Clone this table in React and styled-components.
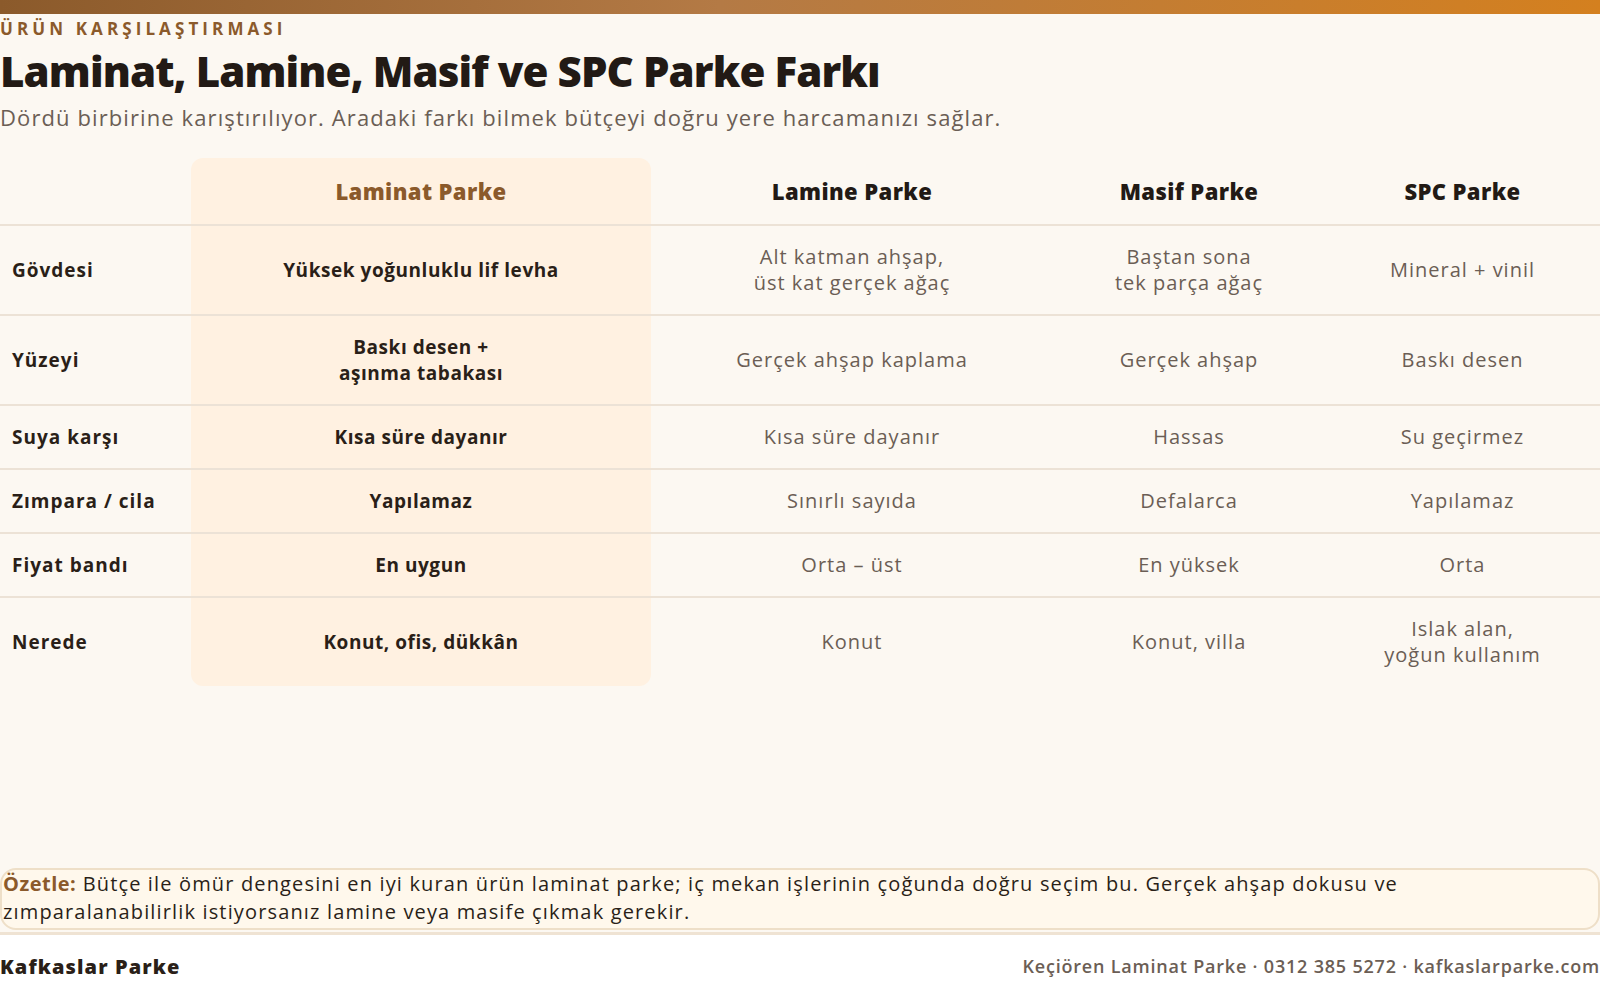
import React from 'react';
import styled, { createGlobalStyle } from 'styled-components';

const GlobalStyle = createGlobalStyle`
  html, body {
    margin: 0;
    padding: 0;
    background: #ffffff;
  }
  body {
    font-family: "Open Sans", "Noto Sans", sans-serif;
    color: #2a1f18;
  }
`;

const Page = styled.div`
  width: 1600px;
  height: 1000px;
  display: flex;
  flex-direction: column;
  overflow: hidden;
`;

const TopBar = styled.div`
  height: 14px;
  flex-shrink: 0;
  background: linear-gradient(90deg, #8b5a2b 0%, #b47a45 45%, #d4801f 100%);
`;

const Main = styled.main`
  flex: 1;
  display: flex;
  flex-direction: column;
  background: #fcf8f2;
  border-bottom: 3px solid #efe3d3;
`;

const Eyebrow = styled.div`
  margin-top: 4px;
  font-size: 17px;
  font-weight: 700;
  letter-spacing: 4.1px;
  color: #8b5a2b;
  line-height: 22px;
`;

const Title = styled.h1`
  margin: 6px 0 0;
  font-size: 42px;
  font-weight: 800;
  letter-spacing: -0.9px;
  line-height: 50px;
  color: #221a15;
`;

const Subtitle = styled.p`
  margin: 6px 0 0;
  font-size: 22px;
  line-height: 30px;
  letter-spacing: 1.1px;
  color: #6b5e55;
`;

const Table = styled.table`
  margin-top: 26px;
  width: 1600px;
  table-layout: fixed;
  border-collapse: separate;
  border-spacing: 0;
`;

const HeadCell = styled.th`
  padding: 18px 12px;
  font-size: 22px;
  line-height: 30px;
  font-weight: 800;
  letter-spacing: 0.4px;
  text-align: center;
  color: ${p => (p.$hl ? '#8b5a2b' : '#221a15')};
  background: ${p => (p.$hl ? '#fff1e1' : 'transparent')};
  border-radius: ${p => (p.$hl ? '12px 12px 0 0' : '0')};
  border-bottom: 2px solid #ece2d6;
`;

const Cell = styled.td`
  padding: 18px 12px;
  font-size: ${p => (p.$label || p.$hl ? '19px' : '20px')};
  line-height: 26px;
  letter-spacing: ${p => (p.$label ? '1px' : p.$hl ? '0.55px' : '1px')};
  text-align: ${p => (p.$label ? 'left' : 'center')};
  font-weight: ${p => (p.$label || p.$hl ? 700 : 400)};
  color: ${p => (p.$label || p.$hl ? '#2a1f18' : '#6b5e55')};
  background: ${p => (p.$hl ? '#fff1e1' : 'transparent')};
  border-bottom: ${p => (p.$last ? 'none' : '2px solid #ece2d6')};
  border-radius: ${p => (p.$hl && p.$last ? '0 0 12px 12px' : '0')};
  white-space: pre-line;
`;

const Spacer = styled.div`
  flex: 1;
`;

const Summary = styled.div`
  margin-bottom: 2px;
  border: 2px solid #eedfc8;
  border-radius: 16px;
  background: #fff8ec;
  padding: 0 0 2px 1px;
  font-size: 20px;
  line-height: 28px;
  letter-spacing: 1.15px;
  color: #2a1f18;
`;

const SummaryLabel = styled.strong`
  color: #8b5a2b;
  font-weight: 700;
  letter-spacing: 0.5px;
`;

const Footer = styled.footer`
  height: 65px;
  flex-shrink: 0;
  display: flex;
  align-items: center;
  justify-content: space-between;
  padding-bottom: 3px;
  box-sizing: border-box;
  background: #ffffff;
`;

const Brand = styled.div`
  font-size: 20px;
  font-weight: 800;
  letter-spacing: 1.1px;
  color: #2a1f18;
`;

const Contact = styled.div`
  font-size: 18px;
  font-weight: 600;
  letter-spacing: 0.8px;
  color: #6b5e55;
`;

const columns = [
  { name: 'Laminat Parke', hl: true },
  { name: 'Lamine Parke' },
  { name: 'Masif Parke' },
  { name: 'SPC Parke' },
];

const rows = [
  ['Gövdesi', 'Yüksek yoğunluklu lif levha', 'Alt katman ahşap,\nüst kat gerçek ağaç', 'Baştan sona\ntek parça ağaç', 'Mineral + vinil'],
  ['Yüzeyi', 'Baskı desen +\naşınma tabakası', 'Gerçek ahşap kaplama', 'Gerçek ahşap', 'Baskı desen'],
  ['Suya karşı', 'Kısa süre dayanır', 'Kısa süre dayanır', 'Hassas', 'Su geçirmez'],
  ['Zımpara / cila', 'Yapılamaz', 'Sınırlı sayıda', 'Defalarca', 'Yapılamaz'],
  ['Fiyat bandı', 'En uygun', 'Orta – üst', 'En yüksek', 'Orta'],
  ['Nerede', 'Konut, ofis, dükkân', 'Konut', 'Konut, villa', 'Islak alan,\nyoğun kullanım'],
];

export default function App() {
  return (
    <>
      <GlobalStyle />
      <Page>
        <TopBar />
        <Main>
          <Eyebrow>ÜRÜN KARŞILAŞTIRMASI</Eyebrow>
          <Title>Laminat, Lamine, Masif ve SPC Parke Farkı</Title>
          <Subtitle>Dördü birbirine karıştırılıyor. Aradaki farkı bilmek bütçeyi doğru yere harcamanızı sağlar.</Subtitle>
          <Table>
            <colgroup>
              <col style={{ width: 191 }} />
              <col style={{ width: 460 }} />
              <col style={{ width: 402 }} />
              <col style={{ width: 272 }} />
              <col style={{ width: 275 }} />
            </colgroup>
            <thead>
              <tr>
                <HeadCell />
                {columns.map(c => (
                  <HeadCell key={c.name} $hl={c.hl}>{c.name}</HeadCell>
                ))}
              </tr>
            </thead>
            <tbody>
              {rows.map((r, i) => {
                const last = i === rows.length - 1;
                return (
                  <tr key={r[0]}>
                    <Cell $label $last={last}>{r[0]}</Cell>
                    {r.slice(1).map((v, j) => (
                      <Cell key={j} $hl={j === 0} $last={last}>{v}</Cell>
                    ))}
                  </tr>
                );
              })}
            </tbody>
          </Table>
          <Spacer />
          <Summary>
            <SummaryLabel>Özetle:</SummaryLabel> Bütçe ile ömür dengesini en iyi kuran ürün laminat parke; iç mekan işlerinin çoğunda doğru seçim bu. Gerçek ahşap dokusu ve
            <br />
            zımparalanabilirlik istiyorsanız lamine veya masife çıkmak gerekir.
          </Summary>
        </Main>
        <Footer>
          <Brand>Kafkaslar Parke</Brand>
          <Contact>Keçiören Laminat Parke · 0312 385 5272 · kafkaslarparke.com</Contact>
        </Footer>
      </Page>
    </>
  );
}
